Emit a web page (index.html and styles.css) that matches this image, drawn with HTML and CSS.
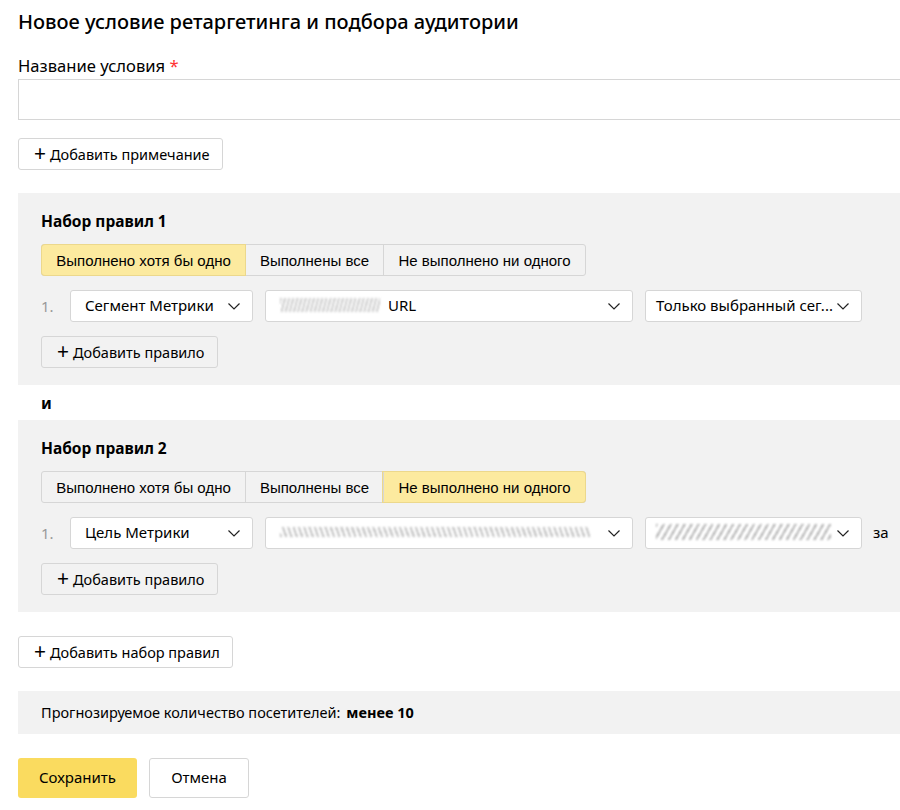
FILE: index.html
```html
<!DOCTYPE html>
<html lang="ru">
<head>
<meta charset="utf-8">
<title>Новое условие ретаргетинга</title>
<link rel="stylesheet" href="styles.css">
</head>
<body>
<div class="page">
  <h1 class="title">Новое условие ретаргетинга и подбора аудитории</h1>

  <div class="field">
    <div class="label">Название условия <span class="req">*</span></div>
    <div class="input"></div>
  </div>

  <button class="btn btn-note"><span class="plus">+</span>Добавить примечание</button>

  <section class="ruleset">
    <h2 class="ruleset-title">Набор правил 1</h2>
    <div class="seg">
      <div class="seg-item seg-item--a is-active">Выполнено хотя бы одно</div>
      <div class="seg-item seg-item--b">Выполнены все</div>
      <div class="seg-item seg-item--c">Не выполнено ни одного</div>
    </div>
    <div class="rule">
      <span class="rule-num">1.</span>
      <div class="select select--type"><span class="select-text">Сегмент Метрики</span><svg class="chev" viewBox="0 0 12 7"><path d="M0.5 0.5 L6 6 L11.5 0.5"/></svg></div>
      <div class="select select--value"><span class="select-text"><span class="blur blur--short"></span>URL</span><svg class="chev" viewBox="0 0 12 7"><path d="M0.5 0.5 L6 6 L11.5 0.5"/></svg></div>
      <div class="select select--mode"><span class="select-text">Только выбранный сег...</span><svg class="chev" viewBox="0 0 12 7"><path d="M0.5 0.5 L6 6 L11.5 0.5"/></svg></div>
    </div>
    <button class="btn btn-rule"><span class="plus">+</span>Добавить правило</button>
  </section>

  <div class="and">и</div>

  <section class="ruleset">
    <h2 class="ruleset-title">Набор правил 2</h2>
    <div class="seg">
      <div class="seg-item seg-item--a">Выполнено хотя бы одно</div>
      <div class="seg-item seg-item--b">Выполнены все</div>
      <div class="seg-item seg-item--c is-active">Не выполнено ни одного</div>
    </div>
    <div class="rule">
      <span class="rule-num">1.</span>
      <div class="select select--type"><span class="select-text">Цель Метрики</span><svg class="chev" viewBox="0 0 12 7"><path d="M0.5 0.5 L6 6 L11.5 0.5"/></svg></div>
      <div class="select select--value"><span class="select-text"><span class="blur blur--long"></span></span><svg class="chev" viewBox="0 0 12 7"><path d="M0.5 0.5 L6 6 L11.5 0.5"/></svg></div>
      <div class="select select--mode"><span class="select-text"><span class="blur blur--mid"></span></span><svg class="chev" viewBox="0 0 12 7"><path d="M0.5 0.5 L6 6 L11.5 0.5"/></svg></div>
      <span class="rule-suffix">за</span>
    </div>
    <button class="btn btn-rule"><span class="plus">+</span>Добавить правило</button>
  </section>

  <button class="btn btn-set"><span class="plus">+</span>Добавить набор правил</button>

  <div class="forecast">Прогнозируемое количество посетителей: <b class="forecast-value">менее 10</b></div>

  <div class="actions">
    <button class="btn-action btn-save">Сохранить</button>
    <button class="btn-action btn-cancel">Отмена</button>
  </div>
</div>
</body>
</html>
```

FILE: styles.css
```css
html, body {
  margin: 0;
  padding: 0;
  overflow: hidden;
  background: #fff;
}

body {
  font-family: "Noto Sans", "Open Sans", sans-serif;
  color: #000;
}

.page {
  width: 900px;
  box-sizing: border-box;
  padding: 10px 0 0 18px;
  display: flex;
  flex-direction: column;
  align-items: flex-start;
}

.title {
  margin: 0;
  font-size: 20px;
  line-height: 24px;
  font-weight: 500;
}

.field {
  margin-top: 22px;
  align-self: stretch;
}

.label {
  font-size: 16.6px;
  line-height: 20px;
}

.req {
  color: #f33;
}

.input {
  margin-top: 3px;
  height: 39px;
  border: 1px solid #d6d6d6;
  border-right: none;
  background: #fff;
}

.btn {
  font-family: inherit;
  font-size: 14.5px;
  color: #000;
  height: 32px;
  padding: 0 12px 0 15px;
  border: 1px solid #d6d6d6;
  border-radius: 3px;
  background: #fff;
  display: inline-flex;
  align-items: center;
  cursor: pointer;
}

.plus {
  font-size: 21px;
  font-weight: 400;
  margin-right: 4px;
  line-height: 1;
  position: relative;
  top: -1px;
}

.btn-note {
  margin-top: 18px;
}

.ruleset {
  margin-top: 23px;
  align-self: stretch;
  background: #f2f2f2;
  padding: 18px 0 17px 23px;
  display: flex;
  flex-direction: column;
  align-items: flex-start;
}

.and + .ruleset {
  margin-top: 0;
}

.ruleset-title {
  margin: 0;
  font-size: 15.5px;
  line-height: 20px;
  font-weight: 700;
}

.seg {
  margin-top: 13px;
  display: flex;
  height: 32px;
  border: 1px solid #d6d6d6;
  border-radius: 3px;
  background: #f2f2f2;
  box-sizing: border-box;
}

.seg-item {
  font-family: "Liberation Sans", Arial, sans-serif;
  font-size: 15px;
  display: flex;
  align-items: center;
  justify-content: center;
  box-sizing: border-box;
  border-left: 1px solid #d6d6d6;
}

.seg-item:first-child {
  border-left: none;
}

.seg-item--a { width: 203px; }
.seg-item--b { width: 138px; }
.seg-item--c { width: 202px; }

.seg-item.is-active {
  background: #fcea9f;
  box-shadow: 0 0 0 1px #ecd88c;
  position: relative;
}

.seg-item.is-active:first-child {
  border-radius: 3px 0 0 3px;
}

.seg-item.is-active:last-child {
  border-radius: 0 3px 3px 0;
}

.rule {
  margin-top: 14px;
  display: flex;
  align-items: center;
}

.rule-num {
  width: 29px;
  font-size: 15px;
  color: #999;
}

.select {
  height: 32px;
  box-sizing: border-box;
  border: 1px solid #d6d6d6;
  border-radius: 3px;
  background: #fff;
  display: flex;
  align-items: center;
  justify-content: space-between;
  padding: 0 12px 0 14px;
  font-size: 15px;
  margin-right: 12px;
}

.select--type { width: 183px; }
.select--value { width: 368px; }
.select--mode { width: 217px; padding-left: 10px; }

.select-text {
  display: flex;
  align-items: center;
  white-space: nowrap;
  position: relative;
  top: -1px;
}

.chev {
  width: 12px;
  height: 7px;
  flex: none;
}

.chev path {
  fill: none;
  stroke: #222;
  stroke-width: 1.2;
}

.blur {
  display: inline-block;
  height: 14px;
  background: repeating-linear-gradient(105deg, #8a8a8a 0 2px, transparent 2px 5px);
  filter: blur(1.1px);
  opacity: 0.75;
}

.blur--short {
  width: 100px;
  margin-right: 8px;
  background: repeating-linear-gradient(105deg, #bbb 0 2px, transparent 2px 4px);
}

.blur--long {
  width: 310px;
  height: 10px;
  background: repeating-linear-gradient(70deg, #aaa 0 2px, transparent 2px 5px);
}

.blur--mid {
  width: 175px;
  height: 16px;
  background: repeating-linear-gradient(120deg, #999 0 2px, transparent 2px 6px);
}

.rule-suffix {
  font-size: 15px;
  margin-left: -1px;
  position: relative;
  top: -1px;
}

.btn-rule {
  margin-top: 14px;
  background: #f2f2f2;
}

.and {
  font-size: 16px;
  font-weight: 700;
  line-height: 20px;
  padding: 8px 0 7px 23px;
}

.btn-set {
  margin-top: 24px;
}

.forecast {
  margin-top: 23px;
  align-self: stretch;
  background: #f2f2f2;
  height: 43px;
  box-sizing: border-box;
  padding: 0 0 1px 23px;
  display: flex;
  align-items: center;
  font-size: 14.5px;
}

.forecast-value {
  margin-left: 6px;
  font-weight: 700;
}

.actions {
  margin-top: 24px;
  display: flex;
  gap: 12px;
}

.btn-action {
  font-family: inherit;
  font-size: 15px;
  color: #000;
  height: 40px;
  border-radius: 3px;
  cursor: pointer;
  padding: 0 0 2px;
}

.btn-save {
  width: 119px;
  background: #fadb5f;
  border: none;
}

.btn-cancel {
  width: 100px;
  background: #fff;
  border: 1px solid #d6d6d6;
}
```
